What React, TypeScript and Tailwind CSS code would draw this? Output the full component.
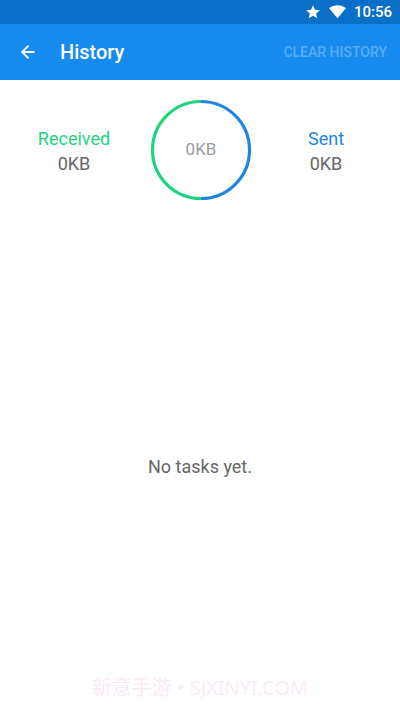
import { ArrowLeft } from 'lucide-react'

const StatusBar = () => (
	<div className="h-6 bg-[#0b6fc8] flex items-center justify-end pr-[8px] gap-[8px] text-white">
		<svg width="16" height="16" viewBox="0 0 24 24" fill="white">
			<path d="M12 2l2.9 6.8 7.4.6-5.6 4.9 1.7 7.2L12 17.7l-6.4 3.8 1.7-7.2-5.6-4.9 7.4-.6z" />
		</svg>
		<svg width="17" height="14" viewBox="0 0 24 20" fill="white">
			<path d="M12 19L0 4.5C3.3 1.9 7.5.3 12 .3s8.7 1.6 12 4.2z" />
		</svg>
		<span className="text-[15px] font-medium">10:56</span>
	</div>
)

const Ring = () => (
	<div className="relative w-[102px] h-[102px] flex items-center justify-center">
		<svg width="102" height="102" viewBox="0 0 102 102" className="absolute inset-0">
			<path d="M51 2.5 A48.5 48.5 0 0 0 51 99.5" fill="none" stroke="#1ed47f" strokeWidth="3.2" />
			<path d="M51 2.5 A48.5 48.5 0 0 1 51 99.5" fill="none" stroke="#1e86e2" strokeWidth="3.2" />
		</svg>
		<span className="text-[17px] text-[#9a9aa4]">0KB</span>
	</div>
)

export default function App() {
	return (
		<div className="w-[400px] h-[711px] bg-white flex flex-col font-['Roboto',sans-serif]">
			<StatusBar />
			<div className="h-14 bg-[#158bef] flex items-center text-white">
				<ArrowLeft className="ml-[18px] w-[20px] h-[20px]" strokeWidth={2.2} />
				<h1 className="ml-[22px] text-[20px] font-medium">History</h1>
				<span className="ml-auto mr-[13px] text-[14px] font-medium text-[#5aadf5]">CLEAR HISTORY</span>
			</div>

			<div className="flex items-center mt-[19px] h-[102px]">
				<div className="flex-1 flex flex-col items-center pr-[2px] pt-[3px]">
					<span className="text-[18px] text-[#1ed47f] leading-[23px]">Received</span>
					<span className="text-[18px] text-[#666] leading-[27px]">0KB</span>
				</div>
				<Ring />
				<div className="flex-1 flex flex-col items-center pt-[3px]">
					<span className="text-[18px] text-[#1e86e2] leading-[23px]">Sent</span>
					<span className="text-[18px] text-[#666] leading-[27px]">0KB</span>
				</div>
			</div>

			<div className="flex-1 flex flex-col items-center">
				<p className="mt-[252px] text-[18px] text-[#666]">No tasks yet.</p>
				<p className="mt-auto mb-[8px] text-[20px] text-[#fdeaf7] font-['Noto_Sans','Noto_Sans_CJK_SC',sans-serif]">
					新意手游 • SJXINYI.COM
				</p>
			</div>
		</div>
	)
}
